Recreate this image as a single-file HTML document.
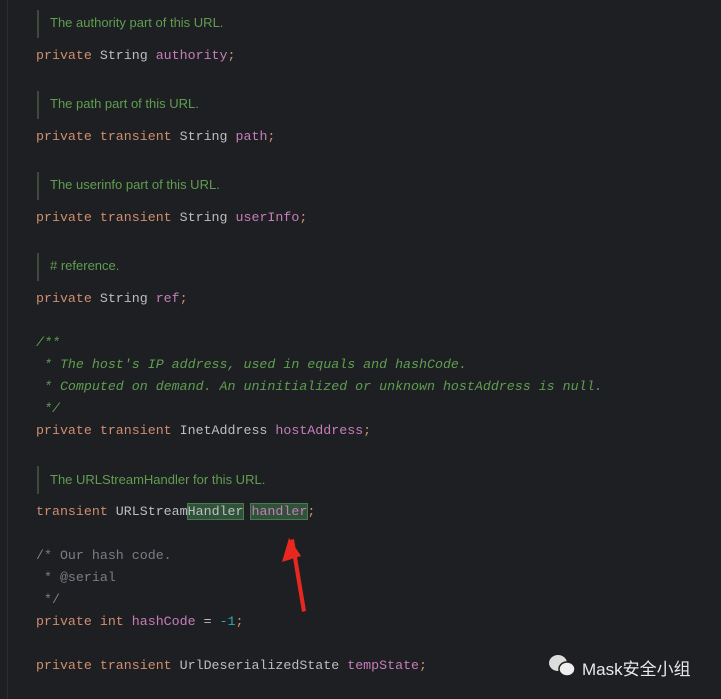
<!DOCTYPE html>
<html><head><meta charset="utf-8"><style>
body{margin:0;width:721px;height:699px;background:#1e1f22;position:relative;overflow:hidden;font-family:"Liberation Mono",monospace;font-size:13.3px;color:#bcbec4}
.l{position:absolute;left:36px;white-space:pre;line-height:16px}
.d{position:absolute;left:37px;width:2px;height:28px;background:#3d4a3a}
.dt{position:absolute;left:50px;font-family:"Liberation Sans",sans-serif;font-size:13px;color:#5f9e50;white-space:pre;line-height:16px}
.k{color:#cf8e6d}.f{color:#c77dbb}.c{color:#5f9e50;font-style:italic}.g{color:#7a7e85}.n{color:#2aacb8}
.h{background:#2f5238;outline:1px solid #4a7a52}
</style></head><body>
<div style="position:absolute;left:7px;top:0;width:1px;height:699px;background:#2b2d30"></div>
<div class="d" style="top:10px"></div><div class="dt" style="top:15px">The authority part of this URL.</div>
<div class="l" style="top:48px"><span class="k">private</span> String <span class="f">authority</span><span class="k">;</span></div>
<div class="d" style="top:91px"></div><div class="dt" style="top:96px">The path part of this URL.</div>
<div class="l" style="top:129px"><span class="k">private transient</span> String <span class="f">path</span><span class="k">;</span></div>
<div class="d" style="top:172px"></div><div class="dt" style="top:177px">The userinfo part of this URL.</div>
<div class="l" style="top:210px"><span class="k">private transient</span> String <span class="f">userInfo</span><span class="k">;</span></div>
<div class="d" style="top:253px"></div><div class="dt" style="top:258px"># reference.</div>
<div class="l" style="top:291px"><span class="k">private</span> String <span class="f">ref</span><span class="k">;</span></div>
<div class="l c" style="top:335px">/**</div>
<div class="l c" style="top:357px"> * The host's IP address, used in equals and hashCode.</div>
<div class="l c" style="top:379px"> * Computed on demand. An uninitialized or unknown hostAddress is null.</div>
<div class="l c" style="top:401px"> */</div>
<div class="l" style="top:423px"><span class="k">private transient</span> InetAddress <span class="f">hostAddress</span><span class="k">;</span></div>
<div class="d" style="top:466px"></div><div class="dt" style="top:472px">The URLStreamHandler for this URL.</div>
<div class="l" style="top:504px"><span class="k">transient</span> URLStream<span class="h">Handler</span> <span class="f h">handler</span><span class="k">;</span></div>
<div class="l g" style="top:548px">/* Our hash code.</div>
<div class="l g" style="top:570px"> * @serial</div>
<div class="l g" style="top:592px"> */</div>
<div class="l" style="top:614px"><span class="k">private int</span> <span class="f">hashCode</span> = <span class="n">-1</span><span class="k">;</span></div>
<div class="l" style="top:658px"><span class="k">private transient</span> UrlDeserializedState <span class="f">tempState</span><span class="k">;</span></div>
<svg style="position:absolute;left:282px;top:536px" width="32" height="80"><polygon points="8,4 20,76 24,75 12,3" fill="#e8281e"/><polygon points="7,2 0,26 19,20" fill="#e8281e"/></svg>
<svg style="position:absolute;left:548px;top:653px" width="30" height="26"><ellipse cx="10" cy="10" rx="9" ry="8" fill="#ddd"/><ellipse cx="19" cy="16" rx="8" ry="7" fill="#eee" stroke="#1e1f22" stroke-width="1.5"/></svg>
<div style="position:absolute;left:582px;top:655px;font-family:'Liberation Sans','Noto Sans CJK SC',sans-serif;font-size:17px;color:#e8e8e8">Mask安全小组</div>
</body></html>
